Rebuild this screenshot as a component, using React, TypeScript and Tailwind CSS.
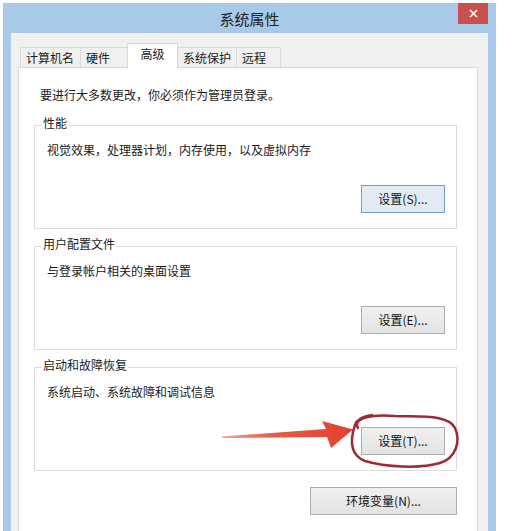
const tabs = [
  { label: '计算机名', width: 'w-[61px]' },
  { label: '硬件', width: 'w-[48px]' },
  { label: '高级', width: 'w-[51px]', active: true },
  { label: '系统保护', width: 'w-[60px]' },
  { label: '远程', width: 'w-[45px]' },
];

const groups = [
  { title: '性能', text: '视觉效果，处理器计划，内存使用，以及虚拟内存', button: '设置(S)...', primary: true },
  { title: '用户配置文件', text: '与登录帐户相关的桌面设置', button: '设置(E)...' },
  { title: '启动和故障恢复', text: '系统启动、系统故障和调试信息', button: '设置(T)...' },
];

function DialogButton({ label, primary, className }: { label: string; primary?: boolean; className?: string }) {
  return (
    <button
      type="button"
      className={`flex h-[28px] items-center justify-center border text-[12px] leading-none text-[#111] ${
        primary ? 'border-[#6f9fd0] bg-[#e2ebf4]' : 'border-[#adadad] bg-gradient-to-b from-[#f0f0f0] to-[#e3e3e3]'
      } ${className ?? ''}`}
    >
      {label}
    </button>
  );
}

function GroupBox({ title, text, button, primary }: { title: string; text: string; button: string; primary?: boolean }) {
  return (
    <div className="relative flex h-[104px] flex-col border border-[#dcdcdc] pl-[12px] pr-[11px] pt-[16px]">
      <span className="absolute -top-[11px] left-[7px] bg-white px-[1px] leading-[16px]">{title}</span>
      <p className="leading-[16px]">{text}</p>
      <div className="mt-[27px] flex justify-end">
        <DialogButton label={button} primary={primary} className="w-[84px]" />
      </div>
    </div>
  );
}

export default function App() {
  return (
    <div className="relative h-[531px] w-[512px] overflow-hidden bg-white font-['Noto_Sans_CJK_SC','Noto_Sans',sans-serif] text-[12px] text-[#1a1a1a]">
      <div className="ml-[3px] mt-[3px] flex h-[540px] w-[493px] flex-col bg-[#a9c9e9]">
        {/* title bar */}
        <div className="relative flex h-[30px] shrink-0 items-center justify-center pt-[2px] text-[15px] text-[#222]">
          系统属性
          <div className="absolute right-[8px] top-0 flex h-[21px] w-[30px] items-center justify-center bg-[#c9504b]">
            <svg width="9" height="9" viewBox="0 0 9 9" fill="none" stroke="white" strokeWidth="1.6">
              <path d="M1 1l7 7M8 1L1 8" />
            </svg>
          </div>
        </div>

        {/* client area */}
        <div className="mx-[8px] flex flex-1 flex-col bg-[#f0f0f0] pl-[7px] pr-[10px] pt-[10px]">
          <div className="flex h-[24px] items-end pl-[2px]">
            {tabs.map((t, i) => (
              <div
                key={t.label}
                className={`flex items-center border border-b-0 border-[#d9d9d9] px-[5px] ${t.width} ${i > 0 ? '-ml-px' : ''} ${
                  t.active ? 'relative z-10 -mb-px h-[25px] items-start justify-center bg-white pt-[2px]' : 'h-[20px] bg-[#f0f0f0]'
                }`}
              >
                <span className="leading-[16px]">{t.label}</span>
              </div>
            ))}
          </div>

          <div className="flex-1 border border-[#d9d9d9] bg-white pl-[15px] pr-[20px] pt-[19px]">
            <p className="ml-[6px] leading-[16px]">要进行大多数更改，你必须作为管理员登录。</p>
            <div className="mt-[22px] flex flex-col gap-[17px]">
              {groups.map((g) => (
                <GroupBox key={g.title} {...g} />
              ))}
            </div>
            <div className="mt-[16px] flex justify-end">
              <DialogButton label="环境变量(N)..." className="w-[147px]" />
            </div>
          </div>
        </div>
      </div>

      {/* red arrow and circled button annotation */}
      <svg className="pointer-events-none absolute inset-0" width="512" height="531" viewBox="0 0 512 531">
        <defs>
          <linearGradient id="arrowFill" x1="222" y1="0" x2="353" y2="0" gradientUnits="userSpaceOnUse">
            <stop offset="0" stopColor="#f3a090" />
            <stop offset="0.4" stopColor="#e85a48" />
            <stop offset="1" stopColor="#e2402f" />
          </linearGradient>
        </defs>
        <polygon
          points="222,436.5 326,429 322,421 353,429.5 331,448 327,437 222,438"
          fill="url(#arrowFill)"
        />
        <path
          d="M358 428 C352 418 372 414 395 416 C420 417 448 414 455 428 C461 441 456 458 440 463 C420 469 385 467 365 461 C350 455 350 440 355 425 C357 419 364 416 372 415"
          fill="none"
          stroke="#9e2a33"
          strokeWidth="2.5"
          strokeLinecap="round"
        />
      </svg>
    </div>
  );
}
